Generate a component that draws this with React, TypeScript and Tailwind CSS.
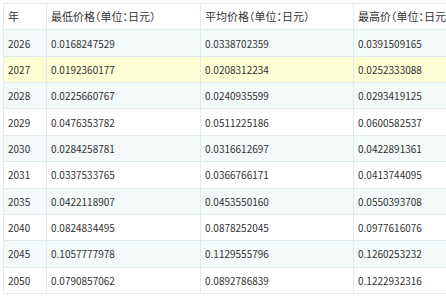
const rows: [string, string, string, string][] = [
  ["2026", "0.0168247529", "0.0338702359", "0.0391509165"],
  ["2027", "0.0192360177", "0.0208312234", "0.0252333088"],
  ["2028", "0.0225660767", "0.0240935599", "0.0293419125"],
  ["2029", "0.0476353782", "0.0511225186", "0.0600582537"],
  ["2030", "0.0284258781", "0.0316612697", "0.0422891361"],
  ["2031", "0.0337533765", "0.0366766171", "0.0413744095"],
  ["2035", "0.0422118907", "0.0453550160", "0.0550393708"],
  ["2040", "0.0824834495", "0.0878252045", "0.0977616076"],
  ["2045", "0.1057777978", "0.1129555796", "0.1260253232"],
  ["2050", "0.0790857062", "0.0892786839", "0.1222932316"],
];

export default function App() {
  return (
    <div className="w-[446px] h-[299px] overflow-hidden bg-white pl-[3px] pt-[3px] font-['Noto_Sans_CJK_SC','Noto_Sans',sans-serif] text-[10px] text-[#333]">
      <table className="w-[504px] border-collapse table-fixed">
        <colgroup>
          <col className="w-[43px]" />
          <col className="w-[154px]" />
          <col className="w-[153px]" />
          <col className="w-[154px]" />
        </colgroup>
        <thead>
          <tr className="bg-white text-[11px] [font-feature-settings:'halt']">
            <th className="h-[26.36px] border border-[#dfeceb] px-[4px] text-left font-normal">年</th>
            <th className="border border-[#dfeceb] px-[4px] text-left font-normal">最低价格（单位：日元）</th>
            <th className="border border-[#dfeceb] px-[4px] text-left font-normal">平均价格（单位：日元）</th>
            <th className="border border-[#dfeceb] px-[4px] text-left font-normal">最高价（单位：日元）</th>
          </tr>
        </thead>
        <tbody>
          {rows.map((r, i) => {
            const bg = r[0] === "2027" ? "bg-[#fefed6]" : i % 2 === 0 ? "bg-[#f4f9f9]" : "bg-white";
            return (
              <tr key={r[0]} className={bg}>
                {r.map((c, j) => (
                  <td key={j} className="h-[26.36px] border border-[#dfeceb] px-[4px]">
                    {c}
                  </td>
                ))}
              </tr>
            );
          })}
        </tbody>
      </table>
    </div>
  );
}
